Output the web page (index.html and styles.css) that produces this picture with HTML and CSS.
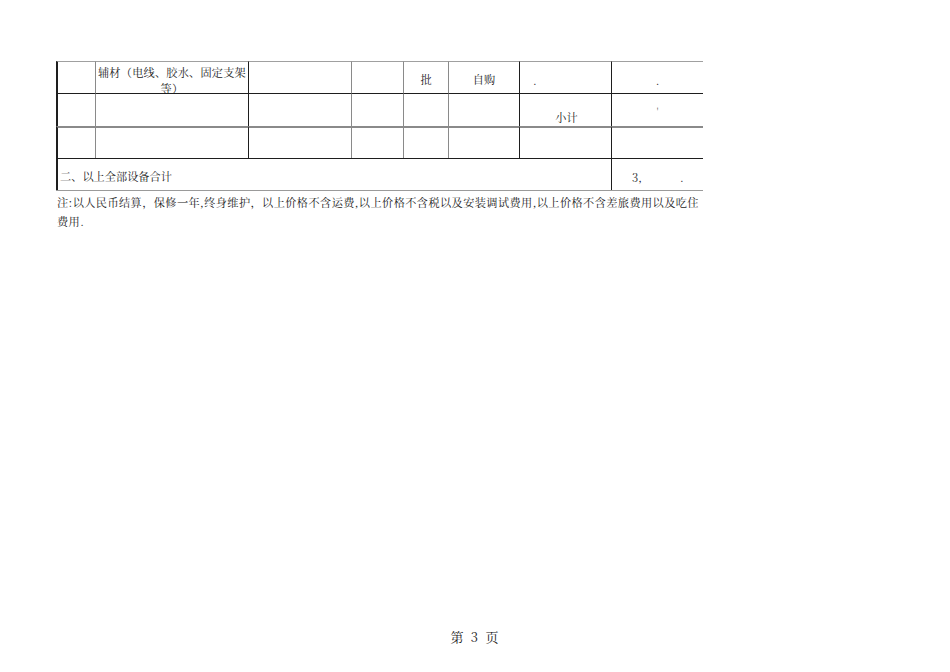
FILE: index.html
```html
<!DOCTYPE html>
<html lang="zh">
<head>
<meta charset="utf-8">
<link rel="stylesheet" href="styles.css">
</head>
<body>
<div class="page">
  <div class="sheet">
    <div class="grid">
      <div class="c r1 v-dark v-thick"></div>
      <div class="c r1 v-gray two-line"><span class="ln">辅材（电线、胶水、固定支架</span><span class="ln">等）</span></div>
      <div class="c r1 v-dark"></div>
      <div class="c r1 v-gray"></div>
      <div class="c r1 v-gray mid">批</div>
      <div class="c r1 v-gray mid">自购</div>
      <div class="c r1 v-dark dot-left">.</div>
      <div class="c r1 v-dark mid dot">.</div>

      <div class="c r2 v-dark v-thick"></div>
      <div class="c r2 v-gray"></div>
      <div class="c r2 v-dark"></div>
      <div class="c r2 v-gray"></div>
      <div class="c r2 v-gray"></div>
      <div class="c r2 v-gray"></div>
      <div class="c r2 v-dark low">小计</div>
      <div class="c r2 v-dark tick">'</div>

      <div class="c r3 v-dark v-thick"></div>
      <div class="c r3 v-gray"></div>
      <div class="c r3 v-dark"></div>
      <div class="c r3 v-gray"></div>
      <div class="c r3 v-gray"></div>
      <div class="c r3 v-gray"></div>
      <div class="c r3 v-dark"></div>
      <div class="c r3 v-dark"></div>

      <div class="c r4 v-dark v-thick total-label">二、以上全部设备合计</div>
      <div class="c r4 v-dark total-value"><span>3,</span><span>.</span></div>
    </div>
    <p class="note">注:以人民币结算，保修一年,终身维护，以上价格不含运费,以上价格不含税以及安装调试费用,以上价格不含差旅费用以及吃住<br>费用.</p>
  </div>
  <div class="footer">第 3 页</div>
</div>
</body>
</html>
```
FILE: styles.css
```css
html, body {
  margin: 0;
  padding: 0;
  background: #ffffff;
}

body {
  font-family: "Noto Serif CJK SC", "Noto Sans CJK SC", "Liberation Serif", serif;
  color: #222222;
  font-size: 11.2px;
}

.page {
  width: 950px;
  height: 672px;
  position: relative;
  box-sizing: border-box;
  padding-top: 61px;
}

.sheet {
  margin-left: 56px;
  width: 647px;
}

.grid {
  display: grid;
  grid-template-columns: 39px 153px 103px 52px 45px 71px 92px 92px;
  grid-template-rows: 32px 33px 32px 32px;
  border-bottom: 1px solid #9a9a9a;
}

.c {
  box-sizing: border-box;
  display: flex;
  align-items: center;
  justify-content: center;
  line-height: 13px;
  white-space: nowrap;
}

.v-dark { border-left: 1px solid #1e1e1e; }
.v-gray { border-left: 1px solid #8a8a8a; }
.v-thick { border-left-width: 2px; }

.r1 { border-top: 1px solid #a0a0a0; }
.r2 { border-top: 1px solid #1e1e1e; }
.r3 { border-top: 2px solid #8a8a8a; }
.r4 { border-top: 1px solid #1e1e1e; }

.two-line {
  flex-direction: column;
  align-items: center;
  justify-content: flex-start;
  padding-top: 2px;
  letter-spacing: 0.2px;
}

.ln {
  display: block;
  line-height: 16px;
}

.mid {
  padding-top: 3px;
}

.dot-left {
  justify-content: flex-start;
  padding-left: 13px;
  padding-top: 5px;
}

.dot {
  padding-top: 5px;
}

.low {
  align-items: flex-end;
  padding-bottom: 2px;
  padding-left: 2px;
}

.tick {
  align-items: flex-start;
  padding-top: 11px;
  font-size: 8px;
  color: #555;
}

.total-label {
  grid-column: 1 / 8;
  justify-content: flex-start;
  padding-left: 2px;
  padding-top: 4px;
}

.total-value {
  justify-content: flex-start;
  padding-left: 20px;
  padding-top: 5px;
  gap: 38px;
}

.note {
  margin: 2px 0 0 1px;
  line-height: 19px;
  white-space: nowrap;
  letter-spacing: 0.4px;
}

.footer {
  position: absolute;
  left: 0;
  right: 0;
  top: 627px;
  text-align: center;
  font-size: 13px;
  letter-spacing: 1px;
  word-spacing: 2px;
}
```
